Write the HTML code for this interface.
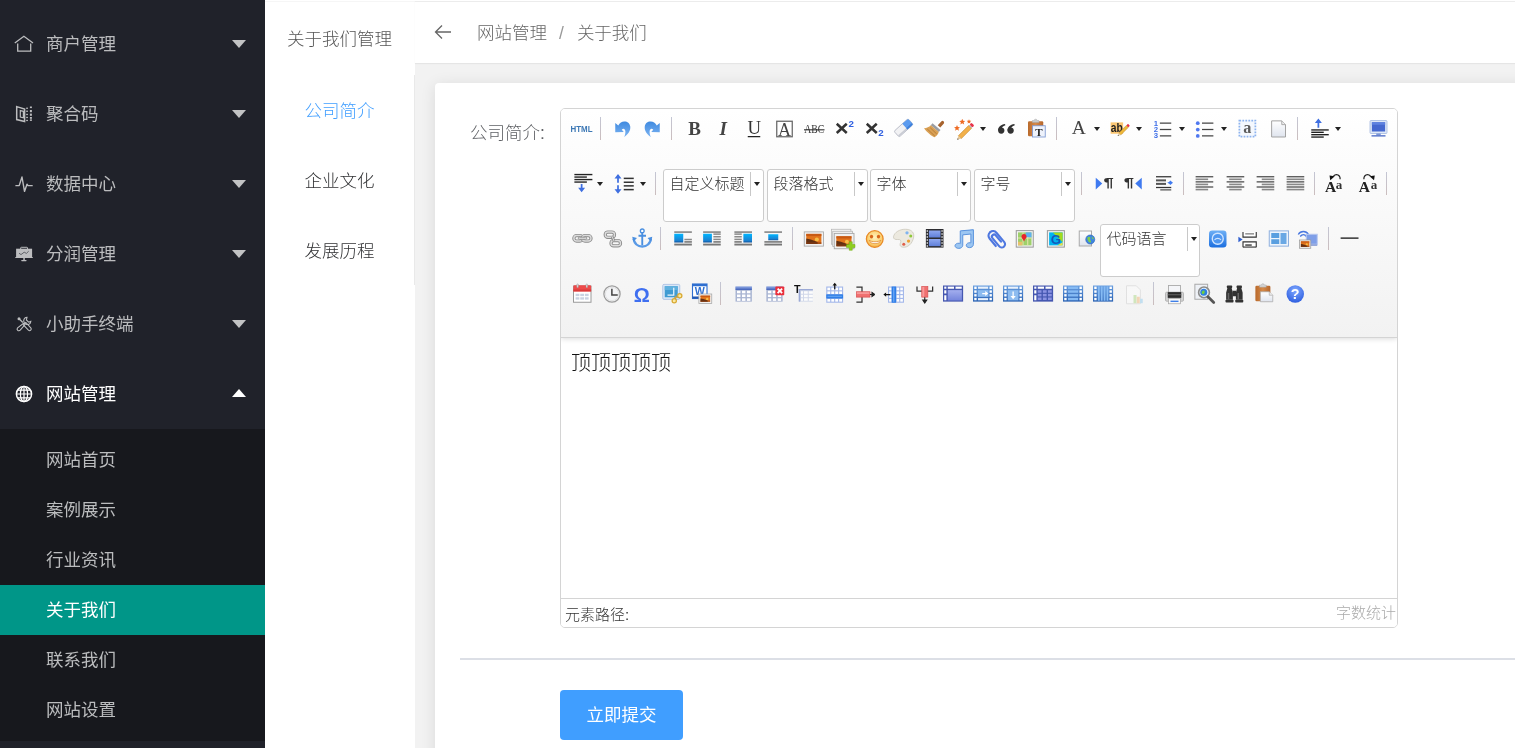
<!DOCTYPE html><html lang="zh-CN"><head><meta charset="utf-8"><title>关于我们管理</title><style>
*{box-sizing:border-box;margin:0;padding:0}
html,body{width:1515px;height:748px;overflow:hidden;background:#fff}
body{will-change:transform}
body{position:relative;font-family:"Liberation Sans","Noto Sans CJK SC",sans-serif;font-size:17.5px;color:#333;font-weight:300}
.abs{position:absolute}
#side{left:0;top:0;width:265px;height:748px;background:#20222a;font-weight:400}
.ni{position:absolute;left:0;width:265px;height:70px;line-height:72px;color:#bbbcbe;padding-left:46px;white-space:nowrap}
.ni svg{position:absolute;left:12px;top:23px;width:24px;height:24px}
.ni i{position:absolute;left:231.500px;top:32px;width:0;height:0;border:7.300px solid transparent;border-top:8px solid #c2c3c4;border-bottom-width:0}
.ni.open{color:#fff}
.ni.open i{border-top-width:0;border-bottom:8px solid #fff;top:31px}
#sub{left:0;top:429px;width:265px;height:312px;background:#17181d}
.si{position:absolute;left:0;width:265px;height:50px;line-height:50px;padding-left:46px;color:#bbbcbe;white-space:nowrap}
.si.on{background:#009688;color:#fff}
#col2{left:265px;top:0;width:150px;height:748px;background:#fff}
#col2 .t{position:absolute;left:22px;top:0;height:76px;line-height:78px;color:#555;white-space:nowrap}
#col2 .m{position:absolute;left:0;width:149px;height:70px;line-height:72px;text-align:center;color:#303133;white-space:nowrap}
#col2 .m.on{color:#409eff}
#col2 .l{position:absolute;left:0;top:1px;width:150px;height:1px;background:#f6f6f6}
#col2 .b{position:absolute;left:149px;top:75px;width:1px;height:210px;background:#e9e9e9}
#main{left:415px;top:0;width:1100px;height:748px;background:#f2f2f2}
#hdr{left:0;top:0;width:1100px;height:63px;background:linear-gradient(#fff 0,#fff 1px,#ececec 1px,#ececec 2px,#fff 2px);box-shadow:0 1px 1px rgba(0,0,0,.05)}
#hdr .bc{position:absolute;left:62px;top:2px;height:63px;line-height:62px;color:#666;white-space:nowrap}
#hdr .bc b{font-weight:normal;color:#999;margin:0 13px 0 12px}
#card{left:20px;top:83px;width:1200px;height:800px;background:#fff;border-radius:4px;box-shadow:0 2px 15px 0 rgba(0,0,0,.1)}
#lbl{left:35px;top:32px;height:36px;line-height:36px;color:#606266;white-space:nowrap}
#ed{left:125px;top:25px;width:838px;height:520px;border:1px solid #d4d4d4;border-radius:5px;background:#fff;overflow:hidden}
#tb{left:0;top:0;width:836px;height:229px;background:linear-gradient(#fff,#f2f2f2);border-bottom:1px solid #d4d4d4;box-shadow:0 1px 5px rgba(0,0,0,.14);z-index:2}
.ic{position:absolute;width:25px;height:25px}
.ic svg{width:25px;height:25px;display:block}
.sep{position:absolute;width:1px;height:23px;background:linear-gradient(#c3c6d4,#cbbdbd)}
.ar{position:absolute;width:0;height:0;border:3.6px solid transparent;border-top:4.2px solid #222;border-bottom-width:0}
.cb{position:absolute;width:100.5px;height:53px;background:#fff;border:1px solid #ccc;border-radius:3px;font-size:15px;line-height:27px;color:#333;padding-left:5.5px;white-space:nowrap}
.cb u{position:absolute;left:86px;top:2px;width:1px;height:24px;background:#c8c8c8}
.cb .ar{left:90px;top:12px}
#body{left:0;top:230px;width:836px;height:260px;background:#fff;padding:10px 10px;font-size:20px;line-height:28px;color:#111}
#bot{left:0;top:489px;width:836px;height:29px;border-top:1px solid #d4d4d4;background:#fff;font-size:15px;line-height:32px;color:#333;padding-left:4px}
#bot span{position:absolute;right:1px;top:0;line-height:28px;color:#aaa}
#hr{left:25px;top:575px;width:1100px;height:2px;background:#dcdfe6}
#btn{left:125px;top:607px;width:123px;height:50px;line-height:50px;background:#409eff;border-radius:4px;color:#fff;text-align:center;font-weight:400}
</style></head><body>
<svg width="0" height="0" style="position:absolute"><defs>
<linearGradient id="gBlue" x1="0" y1="0" x2="0" y2="1"><stop offset="0" stop-color="#3f8ae0"/><stop offset="1" stop-color="#7db4f2"/></linearGradient>
<linearGradient id="gPage" x1="0" y1="0" x2="0" y2="1"><stop offset="0" stop-color="#fff"/><stop offset="1" stop-color="#dfe4ee"/></linearGradient>
<linearGradient id="gSun" x1="0" y1="0" x2="0" y2="1"><stop offset="0" stop-color="#7a2c10"/><stop offset=".55" stop-color="#f08a1c"/><stop offset="1" stop-color="#5a2a12"/></linearGradient>
<linearGradient id="gTbl" x1="0" y1="0" x2="0" y2="1"><stop offset="0" stop-color="#8fa9e6"/><stop offset="1" stop-color="#3f5fb8"/></linearGradient>
<linearGradient id="gTb2" x1="0" y1="0" x2="0" y2="1"><stop offset="0" stop-color="#6a9fe0"/><stop offset="1" stop-color="#2a62b4"/></linearGradient>
<radialGradient id="gSmile" cx=".5" cy=".4" r=".6"><stop offset="0" stop-color="#fff3c0"/><stop offset=".7" stop-color="#fbd070"/><stop offset="1" stop-color="#f4a840"/></radialGradient>
<radialGradient id="gHelp" cx=".5" cy=".3" r=".7"><stop offset="0" stop-color="#7fa8ff"/><stop offset="1" stop-color="#2f5fe0"/></radialGradient>
<linearGradient id="gApp" x1="0" y1="0" x2="0" y2="1"><stop offset="0" stop-color="#6fb0f5"/><stop offset="1" stop-color="#1c6fe0"/></linearGradient>
<linearGradient id="gClip" x1="0" y1="0" x2="1" y2="0"><stop offset="0" stop-color="#b96a2c"/><stop offset=".5" stop-color="#d58a4a"/><stop offset="1" stop-color="#b5652a"/></linearGradient>
<linearGradient id="gImg" x1="0" y1="0" x2="0" y2="1"><stop offset="0" stop-color="#00b6ff"/><stop offset=".8" stop-color="#1b7fd0"/><stop offset="1" stop-color="#0d4f96"/></linearGradient>
<linearGradient id="gFilm" x1="0" y1="0" x2="0" y2="1"><stop offset="0" stop-color="#8fa8f0"/><stop offset="1" stop-color="#5f7fd8"/></linearGradient>
<linearGradient id="gChain" x1="0" y1="0" x2="0" y2="1"><stop offset="0" stop-color="#e8e8e8"/><stop offset="1" stop-color="#a8a8a8"/></linearGradient>
<linearGradient id="gLav" x1="0" y1="0" x2="0" y2="1"><stop offset="0" stop-color="#a3aeee"/><stop offset="1" stop-color="#7585dc"/></linearGradient></defs></svg>
<div id="side" class="abs">
<div class="ni" style="top:8px"><svg viewBox="0 0 24 24"><path d="M2.8 12L11.900 5.200L21 12" fill="none" stroke="#bcbdbf" stroke-width="1.300"/><path d="M5.700 12.400V20.200H18.700V12.400" fill="none" stroke="#bcbdbf" stroke-width="1.300"/></svg>商户管理<i></i></div>
<div class="ni" style="top:78px"><svg viewBox="0 0 24 24"><path d="M4.700 5.600L12.600 8V20.600L4.700 18.600z" fill="none" stroke="#bcbdbf" stroke-width="1.500"/><path d="M8.300 9.600L11.400 10.300V16.800L8.300 16.100z" fill="none" stroke="#bcbdbf" stroke-width="1.200"/><rect x="14.200" y="6.6" width="1.700" height="1.300" fill="#bcbdbf"/><rect x="17.900" y="5.5" width="2" height="1.6" fill="#bcbdbf"/><rect x="14.200" y="9.6" width="1.700" height="1.300" fill="#bcbdbf"/><rect x="17.900" y="9" width="2" height="2.2" fill="#bcbdbf"/><rect x="14.200" y="12.8" width="1.700" height="1.300" fill="#bcbdbf"/><rect x="17.900" y="12.6" width="2" height="2.2" fill="#bcbdbf"/><rect x="14.200" y="15.8" width="1.700" height="1.300" fill="#bcbdbf"/><rect x="17.900" y="16" width="2" height="1.8" fill="#bcbdbf"/><rect x="14.200" y="18.8" width="1.700" height="1.300" fill="#bcbdbf"/><rect x="17.900" y="18.4" width="2" height="1.5" fill="#bcbdbf"/></svg>聚合码<i></i></div>
<div class="ni" style="top:148px"><svg viewBox="0 0 24 24"><path d="M3.400 14.600H7.200L10 6L12.500 20.400L15 13.200L16 14.600H20.700" fill="none" stroke="#bcbdbf" stroke-width="1.400" stroke-linejoin="round"/></svg>数据中心<i></i></div>
<div class="ni" style="top:218px"><svg viewBox="0 0 24 24"><rect x="8.700" y="6.300" width="6.800" height="2.400" rx=".6" fill="none" stroke="#bcbdbf" stroke-width="1"/><rect x="4.100" y="7.700" width="16" height="8.700" fill="#bcbdbf"/><rect x="3.200" y="16" width="17.700" height="1.100" rx=".5" fill="#bcbdbf"/><rect x="11.300" y="17" width="1.500" height="2.200" fill="#bcbdbf"/><rect x="9.200" y="19" width="5.400" height="1.200" rx=".6" fill="#bcbdbf"/><path d="M7 12.200L9 13.600L12.200 11.200L14.400 12.400L16.700 10.200" fill="none" stroke="#55575e" stroke-width=".9"/></svg>分润管理<i></i></div>
<div class="ni" style="top:288px"><svg viewBox="0 0 24 24"><circle cx="7" cy="7.800" r="1.500" fill="#bcbdbf"/><path d="M7.800 8.600L10.800 11.400" stroke="#bcbdbf" stroke-width="1.300"/><path d="M11.600 12.200L13 13.600L8.200 19.200A1.700 1.700 0 0 1 5.600 16.800z" fill="none" stroke="#bcbdbf" stroke-width="1.100"/><path d="M15 6.400A3.200 3.200 0 0 0 12.400 11.600L13.600 12.800A3.200 3.200 0 0 0 18.800 10.400L16.600 11.200L14.400 9z" fill="none" stroke="#bcbdbf" stroke-width="1.100"/><path d="M12.400 12.600L13.800 11.400L18.800 16.800A1.700 1.700 0 0 1 16.400 19.200L11.400 14z" fill="none" stroke="#bcbdbf" stroke-width="1.100"/></svg>小助手终端<i></i></div>
<div class="ni open" style="top:358px"><svg viewBox="0 0 24 24"><circle cx="12" cy="13" r="7.600" fill="none" stroke="#fff" stroke-width="1.500"/><ellipse cx="12" cy="13" rx="3.600" ry="7.600" fill="none" stroke="#fff" stroke-width="1.200"/><path d="M12 5.400V20.600M4.400 13H19.600M5.600 9.200H18.400M5.600 16.800H18.400" stroke="#fff" stroke-width="1.200" fill="none"/></svg>网站管理<i></i></div>
<div id="sub" class="abs">
<div class="si" style="top:6px">网站首页</div>
<div class="si" style="top:56px">案例展示</div>
<div class="si" style="top:106px">行业资讯</div>
<div class="si on" style="top:156px">关于我们</div>
<div class="si" style="top:206px">联系我们</div>
<div class="si" style="top:256px">网站设置</div>
</div></div>
<div id="col2" class="abs"><div class="l"></div><div class="t">关于我们管理</div><div class="b"></div>
<div class="m on" style="top:75px">公司简介</div>
<div class="m" style="top:145px">企业文化</div>
<div class="m" style="top:215px">发展历程</div>
</div>
<div id="main" class="abs">
<div id="hdr" class="abs"><svg class="abs" style="left:19px;top:22px" width="18" height="20" viewBox="0 0 18 20"><path d="M1.5 10H17M8 3.5L1.5 10L8 16.5" fill="none" stroke="#666" stroke-width="1.3"/></svg><div class="bc">网站管理<b>/</b>关于我们</div></div>
<div id="card" class="abs">
<div id="lbl" class="abs">公司简介:</div>
<div id="ed" class="abs"><div id="tb" class="abs">
<div class="ic" style="left:7.50px;top:6.50px"><svg viewBox="0 0 20 20"><text x="10" y="12.4" font-size="7.4" font-weight="bold" fill="#3d78b5" text-anchor="middle" textLength="17.6" lengthAdjust="spacingAndGlyphs" font-family="Liberation Sans,sans-serif">HTML</text></svg></div>
<div class="sep" style="left:39px;top:8px"></div>
<div class="ic" style="left:48.82px;top:6.50px"><svg viewBox="0 0 20 20"><path d="M4.2 5.6 L4.2 13 L11 12.7 L9.4 11 C10.6 9.6 12.2 10.4 12.3 12.4 C12.4 14 12 15.4 11.3 16.8 C14.6 14.6 16.6 11.6 16.2 8.4 C15.9 5.8 13.8 4.3 11.4 4.4 C9.4 4.5 7.8 5.6 6.6 7.6 Z" fill="url(#gBlue)"/></svg></div>
<div class="ic" style="left:78.89px;top:6.50px"><svg viewBox="0 0 20 20"><g transform="translate(20,0) scale(-1,1)"><path d="M4.2 5.6 L4.2 13 L11 12.7 L9.4 11 C10.6 9.6 12.2 10.4 12.3 12.4 C12.4 14 12 15.4 11.3 16.8 C14.6 14.6 16.6 11.6 16.2 8.4 C15.9 5.8 13.8 4.3 11.4 4.4 C9.4 4.5 7.8 5.6 6.6 7.6 Z" fill="url(#gBlue)"/></g></svg></div>
<div class="sep" style="left:110px;top:8px"></div>
<div class="ic" style="left:121.21px;top:6.50px"><svg viewBox="0 0 20 20"><text x="10" y="15.2" font-size="15.2" font-weight="bold" fill="#444" text-anchor="middle" font-family="Liberation Serif,serif">B</text></svg></div>
<div class="ic" style="left:149.28px;top:6.50px"><svg viewBox="0 0 20 20"><text x="10.6" y="15.2" font-size="15.2" font-weight="bold" font-style="italic" fill="#444" text-anchor="middle" font-family="Liberation Serif,serif">I</text></svg></div>
<div class="ic" style="left:180.35px;top:6.50px"><svg viewBox="0 0 20 20"><text x="10.6" y="14.6" font-size="15" fill="#333" text-anchor="middle" font-family="Liberation Serif,serif">U</text><rect x="5.4" y="16" width="10" height="1" fill="#222"/></svg></div>
<div class="ic" style="left:210.42px;top:6.50px"><svg viewBox="0 0 20 20"><rect x="4.6" y="4.2" width="12.4" height="12.4" fill="#fff" stroke="#666" stroke-width="1"/><text x="10.8" y="15.6" font-size="14.5" fill="#444" text-anchor="middle" font-family="Liberation Serif,serif">A</text></svg></div>
<div class="ic" style="left:240.49px;top:6.50px"><svg viewBox="0 0 20 20"><text x="10.6" y="13.9" font-size="10" fill="#333" text-anchor="middle" textLength="16" lengthAdjust="spacingAndGlyphs" font-family="Liberation Serif,serif">ABC</text><rect x="2.4" y="10.6" width="16.4" height=".9" fill="#333"/></svg></div>
<div class="ic" style="left:269.56px;top:6.50px"><svg viewBox="0 0 20 20"><path d="M4.6 6.2L12.6 13.6M12.6 6.2L4.6 13.6" stroke="#333" stroke-width="2" stroke-linecap="butt" fill="none"/><text x="16.2" y="8.6" font-size="7.8" font-weight="bold" fill="#2f5fe0" text-anchor="middle" font-family="Liberation Sans,sans-serif">2</text></svg></div>
<div class="ic" style="left:299.63px;top:6.50px"><svg viewBox="0 0 20 20"><path d="M4.6 6.2L12.6 13.6M12.6 6.2L4.6 13.6" stroke="#333" stroke-width="2" stroke-linecap="butt" fill="none"/><text x="16" y="15.6" font-size="7.8" font-weight="bold" fill="#2f5fe0" text-anchor="middle" font-family="Liberation Sans,sans-serif">2</text></svg></div>
<div class="ic" style="left:329.70px;top:6.50px"><svg viewBox="0 0 20 20"><g transform="translate(10.2 9.6) scale(.86) translate(-10 -10) rotate(-42 10 10)"><rect x="1.2" y="6.2" width="17.6" height="7.2" rx="1.4" fill="#f2f2f4" stroke="#b4b8c4" stroke-width=".8"/><path d="M11.6 6.2h5.8a1.4 1.4 0 0 1 1.4 1.4v4.4a1.4 1.4 0 0 1-1.4 1.4h-5.8z" fill="#5b9bef"/><rect x="1.6" y="11.6" width="10" height="1.6" fill="#c9ccd4"/><rect x="11.6" y="11.6" width="6.8" height="1.6" fill="#3f7fd8"/></g></svg></div>
<div class="ic" style="left:359.77px;top:6.50px"><svg viewBox="0 0 20 20"><path d="M13.4 7.4L16.4 4.2a1.3 1.3 0 0 1 1.9 1.7L15.4 9.2z" fill="#a7632e"/><path d="M9.2 5.8L15.6 11.2L14.2 12.8L7.8 7.4z" fill="#9a9da3"/><path d="M7.8 7.4L14.2 12.8C13.6 15 11.8 16.6 10.8 17C8.6 16.2 5.2 13.4 2.4 9.8C4.6 9.6 6.6 8.8 7.8 7.4z" fill="#d9a055"/><path d="M5 10.4L11 16M7.4 9.4l5.2 5" stroke="#b37a35" stroke-width=".7" fill="none"/></svg></div>
<div class="ic" style="left:389.64px;top:6.50px"><svg viewBox="0 0 20 20"><g fill="#ee6a22"><path transform="translate(9,4.6)" d="M0 -2.4L.7 -.8L2.4 -.7L1.1 .4L1.5 2.1L0 1.2L-1.5 2.1L-1.1 .4L-2.4 -.7L-.7 -.8Z"/><path transform="translate(14.4,4.4) scale(.75)" d="M0 -2.4L.7 -.8L2.4 -.7L1.1 .4L1.5 2.1L0 1.2L-1.5 2.1L-1.1 .4L-2.4 -.7L-.7 -.8Z"/><path transform="translate(4.8,9.6)" d="M0 -2.4L.7 -.8L2.4 -.7L1.1 .4L1.5 2.1L0 1.2L-1.5 2.1L-1.1 .4L-2.4 -.7L-.7 -.8Z"/></g><g transform="rotate(-45 12 12)"><rect x="5" y="10.4" width="11.6" height="3.2" fill="#f2b04a" stroke="#c98a2c" stroke-width=".5"/><path d="M5 10.4L2 12L5 13.6z" fill="#e8c99a"/><path d="M2 12l1.2-.6v1.2z" fill="#444"/><rect x="16.6" y="10.4" width="1" height="3.2" fill="#bbb"/><rect x="17.6" y="10.4" width="2.2" height="3.2" rx=".8" fill="#e8334a"/></g></svg></div>
<div class="ar" style="left:418.99px;top:17.80px"></div>
<div class="ic" style="left:433.34px;top:6.50px"><svg viewBox="0 0 20 20"><circle cx="5.800000000000001" cy="11.600000000000001" r="2.500" fill="#333"/><path d="M3.3000000000000003 11.8C3.0 9.0 5.4 6.9 8.8 6.4L9.100000000000001 7.300000000000001C7.2 8.0 6.300000000000001 9.0 6.1 10.0z" fill="#333"/><circle cx="13.299999999999999" cy="11.600000000000001" r="2.500" fill="#333"/><path d="M10.799999999999999 11.8C10.5 9.0 12.899999999999999 6.9 16.299999999999997 6.4L16.6 7.300000000000001C14.7 8.0 13.799999999999999 9.0 13.6 10.0z" fill="#333"/></svg></div>
<div class="ic" style="left:463.41px;top:6.50px"><svg viewBox="0 0 20 20"><rect x="3.2" y="4.2" width="12.2" height="12" rx="1" fill="url(#gClip)"/><path d="M6.6 4.6V3.6h1.6a1.1 1.1 0 0 1 2.2 0h1.6v1.6h-5.4z" fill="#c9c9c9" stroke="#999" stroke-width=".3"/><rect x="6.8" y="7.8" width="10.2" height="9" fill="#eef2fb" stroke="#7f9ad2" stroke-width=".7"/><text x="11.9" y="15.6" font-size="8.8" font-weight="bold" fill="#222" text-anchor="middle" font-family="Liberation Serif,serif">T</text></svg></div>
<div class="sep" style="left:495px;top:8px"></div>
<div class="ic" style="left:504.73px;top:6.50px"><svg viewBox="0 0 20 20"><text x="10.2" y="14.2" font-size="15.6" fill="#444" text-anchor="middle" font-family="Liberation Serif,serif">A</text></svg></div>
<div class="ar" style="left:532.88px;top:17.80px"></div>
<div class="ic" style="left:547.23px;top:6.50px"><svg viewBox="0 0 20 20"><rect x="2.1" y="5.1" width="10" height="9.1" fill="#fbc774"/><text x="7" y="13" font-size="9.6" font-weight="bold" fill="#222" text-anchor="middle" textLength="9.6" lengthAdjust="spacingAndGlyphs" font-family="Liberation Sans,sans-serif">ab</text><g transform="rotate(-45 12.4 11.4)"><rect x="8.2" y="10.3" width="8.6" height="2.2" fill="#f0b93a" stroke="#b8862a" stroke-width=".4"/><path d="M8.2 10.3L5.8 11.4L8.2 12.5z" fill="#e6cfa6"/><path d="M5.8 11.4l1-.45v.9z" fill="#333"/><rect x="16.8" y="10.3" width="1.8" height="2.2" rx=".6" fill="#e8334a"/></g></svg></div>
<div class="ar" style="left:575.38px;top:17.80px"></div>
<div class="ic" style="left:589.73px;top:6.50px"><svg viewBox="0 0 20 20"><rect x="7.1" y="5.2" width="9.1" height="1" fill="#444"/><rect x="7.1" y="10.3" width="9.1" height="1" fill="#444"/><rect x="7.1" y="15.4" width="9.1" height="1" fill="#444"/><text x="3.9" y="7.6" font-size="6.2" font-weight="bold" fill="#3f6fe8" text-anchor="middle" font-family="Liberation Sans,sans-serif">1</text><text x="3.9" y="12.7" font-size="6.2" font-weight="bold" fill="#3f6fe8" text-anchor="middle" font-family="Liberation Sans,sans-serif">2</text><text x="3.9" y="17.8" font-size="6.2" font-weight="bold" fill="#3f6fe8" text-anchor="middle" font-family="Liberation Sans,sans-serif">3</text></svg></div>
<div class="ar" style="left:617.88px;top:17.80px"></div>
<div class="ic" style="left:633.23px;top:6.50px"><svg viewBox="0 0 20 20"><rect x="6.4" y="5.2" width="9.1" height="1" fill="#444"/><rect x="6.4" y="10.3" width="9.1" height="1" fill="#444"/><rect x="6.4" y="15.4" width="9.1" height="1" fill="#444"/><circle cx="3" cy="5.7" r="1.5" fill="#4f78f0"/><circle cx="3" cy="10.8" r="1.5" fill="#4f78f0"/><circle cx="3" cy="15.9" r="1.5" fill="#4f78f0"/></svg></div>
<div class="ar" style="left:660.38px;top:17.80px"></div>
<div class="ic" style="left:676.23px;top:6.50px"><svg viewBox="0 0 20 20"><rect x="1.9" y="3.6" width="12.8" height="12.8" fill="#f4f8fe" stroke="#8db3ee" stroke-width="1.4" stroke-dasharray="1.4 1"/><text x="8.2" y="13.8" font-size="13" font-weight="bold" fill="#5a5a5a" text-anchor="middle" font-family="Liberation Serif,serif">a</text></svg></div>
<div class="ic" style="left:706.60px;top:6.50px"><svg viewBox="0 0 20 20"><path d="M2.9 3.9H11L14 6.9V16.8H2.9z" fill="url(#gPage)" stroke="#a3a3a3" stroke-width=".8"/><path d="M11 3.9V6.9H14" fill="#eee" stroke="#a3a3a3" stroke-width=".7"/></svg></div>
<div class="sep" style="left:736px;top:8px"></div>
<div class="ic" style="left:745.32px;top:6.50px"><svg viewBox="0 0 20 20"><path d="M9.9 2L12.7 5.6H10.6V9.4H9.200000000000001V5.6H7.1000000000000005z" fill="#3f6fe0"/><rect x="4.2" y="10.6" width="14" height="1.1" fill="#222"/><rect x="4.2" y="12.5" width="10" height="1.1" fill="#222"/><rect x="4.2" y="14.4" width="14" height="1.1" fill="#222"/><rect x="4.2" y="16.3" width="10" height="1.1" fill="#222"/></svg></div>
<div class="ar" style="left:774.27px;top:17.80px"></div>
<div class="ic" style="left:7.50px;top:61.50px"><svg viewBox="0 0 20 20"><rect x="4.3" y="2.3" width="14.4" height="1.1" fill="#222"/><rect x="4.3" y="4.3" width="10" height="1.1" fill="#222"/><rect x="4.3" y="6.3" width="14.4" height="1.1" fill="#222"/><rect x="4.3" y="8.3" width="10" height="1.1" fill="#222"/><path d="M10.1 17L12.899999999999999 13.4H10.799999999999999V10.4H9.4V13.4H7.3z" fill="#3f6fe0"/></svg></div>
<div class="ar" style="left:35.65px;top:72.80px"></div>
<div class="ic" style="left:50.00px;top:61.50px"><svg viewBox="0 0 20 20"><path d="M5.6 2.4L8.399999999999999 6.0H6.3V9.4H4.8999999999999995V6.0H2.8z" fill="#3f6fe0"/><path d="M5.6 18.2L8.399999999999999 14.6H6.3V11.4H4.8999999999999995V14.6H2.8z" fill="#3f6fe0"/><rect x="10.2" y="5.3" width="8" height="1.2" fill="#333"/><rect x="10.2" y="8.4" width="8" height="1.2" fill="#333"/><rect x="10.2" y="11.3" width="8" height="1.2" fill="#333"/><rect x="10.2" y="14.3" width="8" height="1.2" fill="#333"/></svg></div>
<div class="ar" style="left:79.45px;top:72.80px"></div>
<div class="sep" style="left:94px;top:63px"></div>
<div class="cb" style="left:102.00px;top:59.50px;width:101px">自定义标题<u></u><div class="ar"></div></div>
<div class="cb" style="left:206.00px;top:59.50px;width:101px">段落格式<u></u><div class="ar"></div></div>
<div class="cb" style="left:309.00px;top:59.50px;width:101px">字体<u></u><div class="ar"></div></div>
<div class="cb" style="left:413.00px;top:59.50px;width:101px">字号<u></u><div class="ar"></div></div>
<div class="sep" style="left:520px;top:63px"></div>
<div class="ic" style="left:531.00px;top:61.50px"><svg viewBox="0 0 20 20"><path d="M3 5.3L8.2 10L3 14.7z" fill="#3f7af0"/><text x="13.2" y="12.700" font-size="10.400" font-weight="bold" fill="#333" text-anchor="middle" textLength="8.200" lengthAdjust="spacingAndGlyphs" font-family="Liberation Sans,sans-serif">¶</text></svg></div>
<div class="ic" style="left:559.37px;top:61.50px"><svg viewBox="0 0 20 20"><text x="7" y="12.700" font-size="10.400" font-weight="bold" fill="#333" text-anchor="middle" textLength="8.200" lengthAdjust="spacingAndGlyphs" font-family="Liberation Sans,sans-serif">¶</text><path d="M17.4 5.3L12.2 10L17.4 14.7z" fill="#3f7af0"/></svg></div>
<div class="ic" style="left:590.14px;top:61.50px"><svg viewBox="0 0 20 20"><rect x="4" y="4.1" width="12.2" height="1" fill="#333"/><rect x="4" y="6.7" width="8" height="1.6" fill="#555"/><rect x="4" y="9.5" width="8" height="1.6" fill="#555"/><rect x="4" y="12.7" width="12.2" height="1" fill="#333"/><rect x="7.4" y="14.6" width="8.8" height="1" fill="#555"/><path d="M17.6 9.4L15.4 7.6L14.6 8.6L13 9.4L14.6 10.2L15.4 11.2z" fill="#3f7af0"/></svg></div>
<div class="sep" style="left:622px;top:63px"></div>
<div class="ic" style="left:631.46px;top:61.50px"><svg viewBox="0 0 20 20"><rect x="2.9" y="4.1" width="14.1" height="1" fill="#4a4a4a"/><rect x="2.9" y="6.0" width="10" height="1.3" fill="#888"/><rect x="2.9" y="8.2" width="14.1" height="1" fill="#4a4a4a"/><rect x="2.9" y="10.1" width="10" height="1.3" fill="#888"/><rect x="2.9" y="12.3" width="14.1" height="1" fill="#4a4a4a"/><rect x="2.9" y="14.200000000000001" width="10" height="1.3" fill="#888"/></svg></div>
<div class="ic" style="left:661.53px;top:61.50px"><svg viewBox="0 0 20 20"><rect x="2.9" y="4.1" width="14.1" height="1" fill="#4a4a4a"/><rect x="4.949999999999999" y="6.0" width="10" height="1.3" fill="#888"/><rect x="2.9" y="8.2" width="14.1" height="1" fill="#4a4a4a"/><rect x="4.949999999999999" y="10.1" width="10" height="1.3" fill="#888"/><rect x="2.9" y="12.3" width="14.1" height="1" fill="#4a4a4a"/><rect x="4.949999999999999" y="14.200000000000001" width="10" height="1.3" fill="#888"/></svg></div>
<div class="ic" style="left:691.60px;top:61.50px"><svg viewBox="0 0 20 20"><rect x="2.9" y="4.1" width="14.1" height="1" fill="#4a4a4a"/><rect x="7.0" y="6.0" width="10" height="1.3" fill="#888"/><rect x="2.9" y="8.2" width="14.1" height="1" fill="#4a4a4a"/><rect x="7.0" y="10.1" width="10" height="1.3" fill="#888"/><rect x="2.9" y="12.3" width="14.1" height="1" fill="#4a4a4a"/><rect x="7.0" y="14.200000000000001" width="10" height="1.3" fill="#888"/></svg></div>
<div class="ic" style="left:721.67px;top:61.50px"><svg viewBox="0 0 20 20"><rect x="2.9" y="4.1" width="14.1" height="1" fill="#4a4a4a"/><rect x="2.9" y="6.0" width="14.1" height="1.3" fill="#888"/><rect x="2.9" y="8.2" width="14.1" height="1" fill="#4a4a4a"/><rect x="2.9" y="10.1" width="14.1" height="1.3" fill="#888"/><rect x="2.9" y="12.3" width="14.1" height="1" fill="#4a4a4a"/><rect x="2.9" y="14.200000000000001" width="14.1" height="1.3" fill="#888"/></svg></div>
<div class="sep" style="left:753px;top:63px"></div>
<div class="ic" style="left:762.99px;top:61.50px"><svg viewBox="0 0 20 20"><text x="5.2" y="16.6" font-size="12.4" font-weight="bold" fill="#222" text-anchor="middle" font-family="Liberation Serif,serif">A</text><text x="12" y="14.5" font-size="10.4" font-weight="bold" fill="#333" text-anchor="middle" font-family="Liberation Serif,serif">a</text><path d="M12.9 6.6C13.2 3.4 10 1.6 7.6 4" fill="none" stroke="#222" stroke-width=".9"/><path d="M4.4 3.6L8.6 4.2L5 7.4z" fill="#111"/></svg></div>
<div class="ic" style="left:793.06px;top:61.50px"><svg viewBox="0 0 20 20"><text x="8.2" y="16.6" font-size="12.4" font-weight="bold" fill="#222" text-anchor="middle" font-family="Liberation Serif,serif">A</text><text x="16" y="14.5" font-size="10.4" font-weight="bold" fill="#333" text-anchor="middle" font-family="Liberation Serif,serif">a</text><path d="M7.9 6.6C7.6 3.4 10.8 1.6 13.2 4" fill="none" stroke="#222" stroke-width=".9"/><path d="M16.6 3.6L12.4 4.2L16 7.4z" fill="#111"/></svg></div>
<div class="sep" style="left:825px;top:63px"></div>
<div class="ic" style="left:7.50px;top:116.50px"><svg viewBox="0 0 20 20"><rect x="3.9" y="7.6" width="7" height="4.4" rx="2.2" fill="none" stroke="#8c8c8c" stroke-width="2.6"/><rect x="3.9" y="7.6" width="7" height="4.4" rx="2.2" fill="none" stroke="#dcdcdc" stroke-width="1.1"/><rect x="10.6" y="7.6" width="7" height="4.4" rx="2.2" fill="none" stroke="#8c8c8c" stroke-width="2.6"/><rect x="10.6" y="7.6" width="7" height="4.4" rx="2.2" fill="none" stroke="#dcdcdc" stroke-width="1.1"/><rect x="7.4" y="8.9" width="6.8" height="1.8" rx=".9" fill="#dcdcdc" stroke="#8c8c8c" stroke-width=".7"/></svg></div>
<div class="ic" style="left:37.57px;top:116.50px"><svg viewBox="0 0 20 20"><rect x="5" y="4.8" width="7.4" height="4.2" rx="2.1" fill="none" stroke="#8c8c8c" stroke-width="2.6"/><rect x="5" y="4.8" width="7.4" height="4.2" rx="2.1" fill="none" stroke="#dcdcdc" stroke-width="1.1"/><rect x="9.6" y="11.6" width="7.6" height="4.2" rx="2.1" fill="none" stroke="#8c8c8c" stroke-width="2.6"/><rect x="9.6" y="11.6" width="7.6" height="4.2" rx="2.1" fill="none" stroke="#dcdcdc" stroke-width="1.1"/><path d="M10.6 8.6L12 12" stroke="#8c8c8c" stroke-width="2.2" fill="none"/><path d="M10.6 8.6L12 12" stroke="#dcdcdc" stroke-width=".8" fill="none"/></svg></div>
<div class="ic" style="left:67.64px;top:116.50px"><svg viewBox="0 0 20 20"><circle cx="10.6" cy="3.9" r="1.5" fill="#fff" stroke="#4a8fe0" stroke-width="1.1"/><path d="M10.6 5.4V15.6M7.6 7.8H13.6" stroke="#4a8fe0" stroke-width="1.5" fill="none"/><path d="M3.6 10.2C4.4 14.2 7.2 16.4 10.6 16.4C14 16.4 16.8 14.2 17.6 10.2" fill="none" stroke="#5a9ae6" stroke-width="1.8"/><path d="M2.6 8.6L6.4 9.6L3.4 12.6z M18.6 8.6L14.8 9.6L17.8 12.6z" fill="#4a8fe0"/></svg></div>
<div class="sep" style="left:99px;top:118px"></div>
<div class="ic" style="left:108.96px;top:116.50px"><svg viewBox="0 0 20 20"><rect x="3.4" y="4.4" width="14.1" height=".9" fill="#555"/><rect x="3.4" y="6.2" width="7.2" height="7" fill="url(#gImg)"/><rect x="11.5" y="10.2" width="6" height="1.2" fill="#8a8a8a"/><rect x="11.5" y="12.3" width="6" height="0.9" fill="#444"/><rect x="3.4" y="14.1" width="14.1" height="1.5" fill="#777"/></svg></div>
<div class="ic" style="left:139.03px;top:116.50px"><svg viewBox="0 0 20 20"><rect x="2.5" y="4.4" width="14.1" height=".9" fill="#555"/><rect x="2.5" y="6.2" width="7" height="7" fill="url(#gImg)"/><rect x="10.7" y="5.9" width="5.9" height="1.2" fill="#8a8a8a"/><rect x="10.7" y="8" width="5.9" height="1.2" fill="#8a8a8a"/><rect x="10.7" y="10.1" width="5.9" height="1.2" fill="#8a8a8a"/><rect x="10.7" y="12.3" width="5.9" height="0.9" fill="#444"/><rect x="2.5" y="14.1" width="14.1" height="1.5" fill="#777"/></svg></div>
<div class="ic" style="left:169.10px;top:116.50px"><svg viewBox="0 0 20 20"><rect x="3.5" y="4.4" width="14.1" height=".9" fill="#555"/><rect x="10.7" y="6.2" width="6.9" height="7" fill="url(#gImg)"/><rect x="3.5" y="5.9" width="5.9" height="1.2" fill="#8a8a8a"/><rect x="3.5" y="8" width="5.9" height="1.2" fill="#8a8a8a"/><rect x="3.5" y="10.1" width="5.9" height="1.2" fill="#8a8a8a"/><rect x="3.5" y="12.3" width="5.9" height="0.9" fill="#444"/><rect x="3.5" y="14.1" width="14.1" height="1.5" fill="#777"/></svg></div>
<div class="ic" style="left:199.17px;top:116.50px"><svg viewBox="0 0 20 20"><rect x="3.5" y="4.4" width="14.1" height=".9" fill="#555"/><rect x="6.6" y="6.6" width="8" height="4.8" fill="url(#gImg)"/><rect x="3.5" y="12.3" width="14.1" height="0.9" fill="#444"/><rect x="3.5" y="14.1" width="14.1" height="1.5" fill="#777"/></svg></div>
<div class="sep" style="left:231px;top:118px"></div>
<div class="ic" style="left:240.49px;top:116.50px"><svg viewBox="0 0 20 20"><rect x="2.6" y="4.7" width="15.4" height="11.4" fill="#f1f1f1" stroke="#a9a9a9" stroke-width=".7"/><rect x="4.2" y="6.3" width="12.1" height="8.1" fill="#e2741c"/><rect x="4.2" y="6.3" width="12.1" height="1.782" fill="#c85a14"/><circle cx="12.669999999999998" cy="10.754999999999999" r="1.62" fill="#f7c44a" opacity=".9"/><path d="M4.2 9.945L7.83 10.754999999999999L13.274999999999999 12.780000000000001V14.399999999999999H4.2z" fill="#4a2410" opacity=".85"/><rect x="4.2" y="12.942" width="12.1" height="1.458" fill="#8a3c12" opacity=".6"/></svg></div>
<div class="ic" style="left:269.56px;top:116.50px"><svg viewBox="0 0 20 20"><rect x=".3" y="2.6" width="15.6" height="12" fill="#f6f6f6" stroke="#b5b5b5" stroke-width=".6"/><rect x="1.4" y="4.2" width="15.8" height="12.2" fill="#f3f3f3" stroke="#b0b0b0" stroke-width=".6"/><rect x="2.6" y="5.9" width="15.8" height="12.3" fill="#f1f1f1" stroke="#a5a5a5" stroke-width=".7"/><rect x="4.3" y="8.2" width="12.1" height="8" fill="#e2741c"/><rect x="4.3" y="8.2" width="12.1" height="1.76" fill="#c85a14"/><circle cx="12.77" cy="12.6" r="1.6" fill="#f7c44a" opacity=".9"/><path d="M4.3 11.799999999999999L7.93 12.6L13.375 14.6V16.2H4.3z" fill="#4a2410" opacity=".85"/><rect x="4.3" y="14.759999999999998" width="12.1" height="1.44" fill="#8a3c12" opacity=".6"/><path d="M14.6 12.6h2.4v2.2h2.2v2.4h-2.2v2.2h-2.4v-2.2h-2.2v-2.4h2.2z" fill="#8fce1e" stroke="#6faa10" stroke-width=".4"/></svg></div>
<div class="ic" style="left:300.63px;top:116.50px"><svg viewBox="0 0 20 20"><circle cx="10.2" cy="10.4" r="6.7" fill="url(#gSmile)" stroke="#e88a28" stroke-width="1"/><ellipse cx="7.6" cy="8.4" rx="1.3" ry="1.5" fill="#d8661a"/><ellipse cx="13.2" cy="8.4" rx="1.3" ry="1.5" fill="#d8661a"/><path d="M5.8 11.4C7.4 13 13.4 13 15 11.4C14.4 15 6.4 15 5.8 11.4z" fill="#fff" stroke="#d8761a" stroke-width=".5"/></svg></div>
<div class="ic" style="left:329.70px;top:116.50px"><svg viewBox="0 0 20 20"><path d="M2 8.6C2.6 5 7 2.6 11.4 2.6C15.6 2.6 18.4 4.6 18.2 8C18 12 15 16.8 10.6 17C7.6 17.1 6.6 15.6 7.6 13.4C8.4 11.6 7.4 10.6 5.4 10.8C3.4 11 1.8 10.4 2 8.6z" fill="#ece9df" stroke="#c9c5b8" stroke-width=".6"/><circle cx="12.8" cy="5.4" r="1.3" fill="#7fb4f0"/><circle cx="15.8" cy="8" r="1.2" fill="#8fc83a"/><circle cx="14" cy="12" r="1.3" fill="#f0a030"/><circle cx="10.2" cy="14.6" r="1.2" fill="#e0604a"/></svg></div>
<div class="ic" style="left:360.07px;top:116.50px"><svg viewBox="0 0 20 20"><rect x="3.9" y="2.4" width="14.1" height="14.9" fill="#2c2c30"/><rect x="6.3" y="3.6" width="9.3" height="5.6" fill="url(#gFilm)"/><rect x="6.3" y="10.4" width="9.3" height="5.7" fill="url(#gFilm)"/><rect x="4.5" y="3.4" width="1.1" height="1.2" fill="#ddd"/><rect x="16.3" y="3.4" width="1.1" height="1.2" fill="#ddd"/><rect x="4.5" y="5.8" width="1.1" height="1.2" fill="#ddd"/><rect x="16.3" y="5.8" width="1.1" height="1.2" fill="#ddd"/><rect x="4.5" y="8.2" width="1.1" height="1.2" fill="#ddd"/><rect x="16.3" y="8.2" width="1.1" height="1.2" fill="#ddd"/><rect x="4.5" y="10.6" width="1.1" height="1.2" fill="#ddd"/><rect x="16.3" y="10.6" width="1.1" height="1.2" fill="#ddd"/><rect x="4.5" y="13" width="1.1" height="1.2" fill="#ddd"/><rect x="16.3" y="13" width="1.1" height="1.2" fill="#ddd"/><rect x="4.5" y="15.4" width="1.1" height="1.2" fill="#ddd"/><rect x="16.3" y="15.4" width="1.1" height="1.2" fill="#ddd"/></svg></div>
<div class="ic" style="left:390.04px;top:116.50px"><svg viewBox="0 0 20 20"><path d="M7.8 4.4L17.4 3.4V14.4" fill="none" stroke="#6fa4e6" stroke-width="1"/><path d="M7.4 3.9L17.9 3V14.6C17.9 16.4 16.4 17.3 14.8 17.3C13.2 17.3 12.2 16.5 12.2 15.4C12.2 14.2 13.6 13.2 15.4 13.4L15.9 13.5V6.4L9.4 7.1V15.4C9.4 17 7.8 17.9 6.2 17.9C4.6 17.9 3.2 17.1 3.2 15.8C3.2 14.5 4.8 13.6 6.6 13.8L7.4 14z" fill="#9cc6f2" stroke="#5b93dd" stroke-width=".8"/></svg></div>
<div class="ic" style="left:420.91px;top:116.50px"><svg viewBox="0 0 20 20"><g transform="rotate(-40 12 10)"><path d="M12 1.6a3.6 3.6 0 0 1 3.6 3.6V15a2.6 2.6 0 0 1-5.2 0V6.4a1.7 1.7 0 0 1 3.4 0V13" fill="none" stroke="#4f78e0" stroke-width="1.7" stroke-linecap="round" transform="translate(-1 1)"/><path d="M12 1.6a3.6 3.6 0 0 0-3.6 3.6V13" fill="none" stroke="#4f78e0" stroke-width="1.7" stroke-linecap="round" transform="translate(-1 1)"/></g></svg></div>
<div class="ic" style="left:450.28px;top:116.50px"><svg viewBox="0 0 20 20"><rect x="4.2" y="3.7" width="13.6" height="13.2" fill="#f4f4f4" stroke="#999" stroke-width=".8"/><rect x="5.6" y="5.1" width="10.8" height="10.4" fill="#9ed06a"/><rect x="11.8" y="5.1" width="4.6" height="4.2" fill="#5fb0f0"/><path d="M5.6 9.6h10.8M9.6 5.1v10.4M13.4 9v6.5" stroke="#e8e4b0" stroke-width=".8"/><rect x="5.6" y="12.6" width="3.4" height="2.9" fill="#e8c06a"/><circle cx="10.4" cy="8.4" r="2" fill="#e8242a"/><path d="M9 9.6L10.4 12.4L11.8 9.6z" fill="#e8242a"/></svg></div>
<div class="ic" style="left:480.45px;top:116.50px"><svg viewBox="0 0 20 20"><rect x="5.1" y="3.7" width="13.6" height="13.2" fill="#f4f4f4" stroke="#999" stroke-width=".8"/><rect x="6.5" y="5.1" width="10.8" height="10.4" fill="#00b4f0"/><path d="M9.5 5.1H17.3V13z" fill="#a4da1c"/><path d="M17.3 13V15.500H13z" fill="#f0e040"/><text x="11.8" y="14.2" font-size="10.5" font-weight="bold" fill="#1457b8" text-anchor="middle" font-family="Liberation Sans,sans-serif">G</text></svg></div>
<div class="ic" style="left:510.12px;top:116.50px"><svg viewBox="0 0 20 20"><rect x="6.6" y="4" width="9.8" height="12" fill="url(#gPage)" stroke="#a9a9a9" stroke-width=".8"/><circle cx="15.4" cy="10.8" r="3.6" fill="#3f86e0" stroke="#2a62b8" stroke-width=".5"/><path d="M13.4 9C14.4 8 15.8 8.6 15.4 10C15 11.4 16.4 11.6 16 13C15 13.6 14 12.8 13.6 11.6C13.2 10.6 12.8 9.8 13.4 9z" fill="#7ccf4a"/><path d="M16.6 8.4c1 .4 1.6 1.4 1.6 2.2l-1.200-.4z" fill="#7ccf4a"/></svg></div>
<div class="cb" style="left:539.00px;top:114.50px;width:100px">代码语言<u></u><div class="ar"></div></div>
<div class="ic" style="left:644.94px;top:116.50px"><svg viewBox="0 0 20 20"><rect x="2.4" y="3.5" width="14" height="13.6" rx="2.6" fill="url(#gApp)"/><circle cx="9.4" cy="10.2" r="4.4" fill="#4f97f0" stroke="#cfe4ff" stroke-width="1.1"/><path d="M6.800 11.200C8 9.400 10.800 9.400 12 11.200" stroke="#cfe4ff" stroke-width=".9" fill="none"/></svg></div>
<div class="ic" style="left:675.01px;top:116.50px"><svg viewBox="0 0 20 20"><path d="M1.9 8.600L5.300 10.800L1.900 13z" fill="#2f5fd0"/><path d="M5.600 4.700V8.900H16.200V4.700" fill="#fff" stroke="#333" stroke-width=".9"/><rect x="7.400" y="5.600" width="7" height="1.300" fill="#999"/><path d="M5.600 17V12.700H16.200V17" fill="#fff" stroke="#333" stroke-width=".9"/><rect x="7.400" y="14.600" width="5.200" height="1.300" fill="#555"/><rect x="5.600" y="16.400" width="10.600" height=".9" fill="#333"/></svg></div>
<div class="ic" style="left:705.08px;top:116.50px"><svg viewBox="0 0 20 20"><rect x="2.600" y="3.900" width="15.400" height="12.200" fill="#eef4fc" stroke="#8fb0de" stroke-width=".8"/><rect x="4.200" y="5.600" width="6.400" height="4" fill="#5a9fe0"/><rect x="4.200" y="10.600" width="6.400" height="3.800" fill="#5a9fe0"/><rect x="11.600" y="5.600" width="4.800" height="8.800" fill="#6aa8e4"/></svg></div>
<div class="ic" style="left:735.15px;top:116.50px"><svg viewBox="0 0 20 20"><path d="M1.800 6.800C3.800 3.600 8 3.600 10 6.800M3.400 8.400C4.800 6.400 7 6.400 8.400 8.400" fill="none" stroke="#4a78e0" stroke-width="1.100"/><rect x="8.200" y="6.600" width="8.800" height="8" fill="#7f9fe8" stroke="#b8c8ee" stroke-width=".8"/><rect x="10.400" y="14.600" width="6.600" height="1.300" fill="#8aa0d8"/><rect x="2.800" y="11.200" width="9" height="6.600" fill="#f2f2f2" stroke="#9a9a9a" stroke-width=".6"/><rect x="3.9" y="12.3" width="6.8" height="4.4" fill="#e2741c"/><rect x="3.9" y="12.3" width="6.8" height="0.9680000000000001" fill="#c85a14"/><circle cx="8.66" cy="14.72" r="0.8800000000000001" fill="#f7c44a" opacity=".9"/><path d="M3.9 14.280000000000001L5.9399999999999995 14.72L9.0 15.82V16.700000000000003H3.9z" fill="#4a2410" opacity=".85"/><rect x="3.9" y="15.908000000000001" width="6.8" height="0.792" fill="#8a3c12" opacity=".6"/></svg></div>
<div class="sep" style="left:767px;top:118px"></div>
<div class="ic" style="left:775.97px;top:116.50px"><svg viewBox="0 0 20 20"><rect x="2.900" y="9.100" width="14.300" height="1.200" fill="#333"/></svg></div>
<div class="ic" style="left:7.50px;top:171.50px"><svg viewBox="0 0 20 20"><rect x="3.6" y="4" width="14" height="13" fill="#fff" stroke="#9a9a9a" stroke-width=".8"/><path d="M3.500 8.300V4.400a1 1 0 0 1 1-1h12.200a1 1 0 0 1 1 1V8.300z" fill="#ee4a4a"/><rect x="3.500" y="6.800" width="14.200" height="1.500" fill="#d83a3a"/><rect x="6.200" y="2.300" width="1.300" height="3" rx=".6" fill="#ddd" stroke="#888" stroke-width=".3"/><rect x="13.600" y="2.300" width="1.300" height="3" rx=".6" fill="#ddd" stroke="#888" stroke-width=".3"/><rect x="5.3" y="10.2" width="3" height="1.900" fill="#c9d2e2"/><rect x="5.3" y="13" width="3" height="1.900" fill="#c9d2e2"/><rect x="9" y="10.2" width="3" height="1.900" fill="#c9d2e2"/><rect x="9" y="13" width="3" height="1.900" fill="#c9d2e2"/><rect x="12.7" y="10.2" width="3" height="1.900" fill="#c9d2e2"/><rect x="12.7" y="13" width="3" height="1.900" fill="#c9d2e2"/></svg></div>
<div class="ic" style="left:37.57px;top:171.50px"><svg viewBox="0 0 20 20"><circle cx="10.400" cy="10.400" r="6.500" fill="#f4f5f7" stroke="#9c9c9c" stroke-width="1"/><circle cx="10.400" cy="10.400" r="5.300" fill="none" stroke="#dcdcdc" stroke-width=".6"/><path d="M10.300 6.200V11.200H15" fill="none" stroke="#444" stroke-width="1.200"/></svg></div>
<div class="ic" style="left:67.64px;top:171.50px"><svg viewBox="0 0 20 20"><text x="10.300" y="16.500" font-size="16" font-weight="bold" fill="#3f6ff0" text-anchor="middle" font-family="Liberation Sans,sans-serif">Ω</text></svg></div>
<div class="ic" style="left:97.71px;top:171.50px"><svg viewBox="0 0 20 20"><rect x="3" y="2.700" width="13.600" height="12" rx="1" fill="#dbe7f7" stroke="#a9c0e2" stroke-width=".7"/><rect x="4.600" y="4.200" width="10.400" height="8.800" fill="#3f9bd2"/><rect x="4.600" y="4.200" width="10.400" height="3" fill="#5fb0de"/><path d="M11.800 5.400V11.200H6.800" fill="none" stroke="#eaf4fc" stroke-width="1"/><circle cx="16.600" cy="11.800" r="1.700" fill="#fbe9a0" stroke="#d8a830" stroke-width="1"/><circle cx="12.200" cy="15.800" r="1.700" fill="#fbe9a0" stroke="#d8a830" stroke-width="1"/><path d="M15.400 12.800L12 13.400M13.200 14.600L13.600 11.600" stroke="#c9a040" stroke-width=".9"/></svg></div>
<div class="ic" style="left:127.78px;top:171.50px"><svg viewBox="0 0 20 20"><rect x="2.800" y="2.400" width="11.600" height="11.600" fill="#fff" stroke="#2f6fd0" stroke-width=".9"/><rect x="2.800" y="2.400" width="11.600" height="1.800" fill="#2f6fd0"/><rect x="2.800" y="12.400" width="11.600" height="1.600" fill="#2458b0"/><text x="8.600" y="11.200" font-size="8.500" font-weight="bold" fill="#2f6fd0" text-anchor="middle" font-family="Liberation Sans,sans-serif">W</text><rect x="7.900" y="10.400" width="10.300" height="7.500" fill="#f1f1f1" stroke="#a5a5a5" stroke-width=".6"/><rect x="9.2" y="11.7" width="7.7" height="4.9" fill="#e2741c"/><rect x="9.2" y="11.7" width="7.7" height="1.078" fill="#c85a14"/><circle cx="14.59" cy="14.395" r="0.9800000000000001" fill="#f7c44a" opacity=".9"/><path d="M9.2 13.905L11.51 14.395L14.975 15.62V16.6H9.2z" fill="#4a2410" opacity=".85"/><rect x="9.2" y="15.718" width="7.7" height="0.882" fill="#8a3c12" opacity=".6"/></svg></div>
<div class="sep" style="left:159px;top:173px"></div>
<div class="ic" style="left:169.10px;top:171.50px"><svg viewBox="0 0 20 20"><g opacity="1"><rect x="4.4" y="4.4" width="13.1" height="12.1" fill="#a9b5d2"/><rect x="4.4" y="4.4" width="13.1" height="2.800" fill="url(#gTbl)"/><rect x="5.60" y="7.80" width="2.77" height="2.03" fill="#fff"/><rect x="5.60" y="10.83" width="2.77" height="2.03" fill="#fff"/><rect x="5.60" y="13.87" width="2.77" height="2.03" fill="#fff"/><rect x="9.57" y="7.80" width="2.77" height="2.03" fill="#fff"/><rect x="9.57" y="10.83" width="2.77" height="2.03" fill="#fff"/><rect x="9.57" y="13.87" width="2.77" height="2.03" fill="#fff"/><rect x="13.53" y="7.80" width="2.77" height="2.03" fill="#fff"/><rect x="13.53" y="10.83" width="2.77" height="2.03" fill="#fff"/><rect x="13.53" y="13.87" width="2.77" height="2.03" fill="#fff"/></g></svg></div>
<div class="ic" style="left:199.17px;top:171.50px"><svg viewBox="0 0 20 20"><g opacity="1"><rect x="5.1" y="4.4" width="13" height="12.1" fill="#a9b5d2"/><rect x="5.1" y="4.4" width="13" height="2.800" fill="url(#gTbl)"/><rect x="6.30" y="7.80" width="2.73" height="2.03" fill="#fff"/><rect x="6.30" y="10.83" width="2.73" height="2.03" fill="#fff"/><rect x="6.30" y="13.87" width="2.73" height="2.03" fill="#fff"/><rect x="10.23" y="7.80" width="2.73" height="2.03" fill="#fff"/><rect x="10.23" y="10.83" width="2.73" height="2.03" fill="#fff"/><rect x="10.23" y="13.87" width="2.73" height="2.03" fill="#fff"/><rect x="14.17" y="7.80" width="2.73" height="2.03" fill="#fff"/><rect x="14.17" y="10.83" width="2.73" height="2.03" fill="#fff"/><rect x="14.17" y="13.87" width="2.73" height="2.03" fill="#fff"/></g><rect x="12.300" y="4.400" width="7.100" height="7" rx=".6" fill="#ea2f3a"/><path d="M14.100 6.100L17.700 9.700M17.700 6.100L14.100 9.700" stroke="#fff" stroke-width="1.500"/></svg></div>
<div class="ic" style="left:229.24px;top:171.50px"><svg viewBox="0 0 20 20"><text x="5.800" y="9.500" font-size="8.600" font-weight="bold" fill="#111" text-anchor="middle" font-family="Liberation Sans,sans-serif">T</text><g opacity=".75"><rect x="7" y="6.400" width="11.300" height="10.100" fill="#c5cee6"/><rect x="7" y="6.400" width="11.300" height="1" fill="#7f92cc"/><rect x="7" y="6.400" width="1.200" height="10.100" fill="#7f92cc"/><rect x="8.8" y="8.2" width="1.6" height="2" fill="#fff"/><rect x="11.2" y="8.2" width="3" height="2" fill="#fff"/><rect x="15" y="8.2" width="3.3" height="2" fill="#fff"/><rect x="8.8" y="11" width="1.6" height="2" fill="#fff"/><rect x="11.2" y="11" width="3" height="2" fill="#fff"/><rect x="15" y="11" width="3.3" height="2" fill="#fff"/><rect x="8.8" y="13.8" width="1.6" height="2" fill="#fff"/><rect x="11.2" y="13.8" width="3" height="2" fill="#fff"/><rect x="15" y="13.8" width="3.3" height="2" fill="#fff"/></g></svg></div>
<div class="ic" style="left:258.71px;top:171.50px"><svg viewBox="0 0 20 20"><rect x="5" y="4.4" width="13.5" height="13" fill="#a4b8ea"/><rect x="5.90" y="5.30" width="2.25" height="2.12" fill="#fff"/><rect x="5.90" y="8.33" width="2.25" height="2.12" fill="#fff"/><rect x="5.90" y="11.35" width="2.25" height="2.12" fill="#fff"/><rect x="5.90" y="14.38" width="2.25" height="2.12" fill="#fff"/><rect x="9.05" y="5.30" width="2.25" height="2.12" fill="#fff"/><rect x="9.05" y="8.33" width="2.25" height="2.12" fill="#fff"/><rect x="9.05" y="11.35" width="2.25" height="2.12" fill="#fff"/><rect x="9.05" y="14.38" width="2.25" height="2.12" fill="#fff"/><rect x="12.20" y="5.30" width="2.25" height="2.12" fill="#fff"/><rect x="12.20" y="8.33" width="2.25" height="2.12" fill="#fff"/><rect x="12.20" y="11.35" width="2.25" height="2.12" fill="#fff"/><rect x="12.20" y="14.38" width="2.25" height="2.12" fill="#fff"/><rect x="15.35" y="5.30" width="2.25" height="2.12" fill="#fff"/><rect x="15.35" y="8.33" width="2.25" height="2.12" fill="#fff"/><rect x="15.35" y="11.35" width="2.25" height="2.12" fill="#fff"/><rect x="15.35" y="14.38" width="2.25" height="2.12" fill="#fff"/><rect x="5" y="10.700" width="13.500" height="3.300" fill="#2f7fe8"/><rect x="6" y="11.800" width="11.500" height="1" fill="#5f9ff0"/><path d="M11.800 1.400L13.600 3.600H12.300V6.600H11.300V3.600H10z" fill="#111"/></svg></div>
<div class="ic" style="left:288.78px;top:171.50px"><svg viewBox="0 0 20 20"><path d="M5.100 4.900H9.600V16.900H5.100" fill="none" stroke="#333" stroke-width="1"/><rect x="5.100" y="8.600" width="10.900" height="4.300" fill="#f07070" stroke="#d84a4a" stroke-width=".5"/><rect x="5.500" y="9" width="10" height="1.400" fill="#f79a9a"/><path d="M16 10.800H18.200M17.600 9.200L19.800 10.800L17.600 12.400z" stroke="#222" stroke-width=".9" fill="#222"/></svg></div>
<div class="ic" style="left:318.75px;top:171.50px"><svg viewBox="0 0 20 20"><rect x="6.4" y="4.4" width="12.8" height="13" fill="#a4b8ea"/><rect x="7.30" y="5.30" width="2.08" height="2.12" fill="#fff"/><rect x="7.30" y="8.33" width="2.08" height="2.12" fill="#fff"/><rect x="7.30" y="11.35" width="2.08" height="2.12" fill="#fff"/><rect x="7.30" y="14.38" width="2.08" height="2.12" fill="#fff"/><rect x="10.28" y="5.30" width="2.08" height="2.12" fill="#fff"/><rect x="10.28" y="8.33" width="2.08" height="2.12" fill="#fff"/><rect x="10.28" y="11.35" width="2.08" height="2.12" fill="#fff"/><rect x="10.28" y="14.38" width="2.08" height="2.12" fill="#fff"/><rect x="13.25" y="5.30" width="2.08" height="2.12" fill="#fff"/><rect x="13.25" y="8.33" width="2.08" height="2.12" fill="#fff"/><rect x="13.25" y="11.35" width="2.08" height="2.12" fill="#fff"/><rect x="13.25" y="14.38" width="2.08" height="2.12" fill="#fff"/><rect x="16.23" y="5.30" width="2.08" height="2.12" fill="#fff"/><rect x="16.23" y="8.33" width="2.08" height="2.12" fill="#fff"/><rect x="16.23" y="11.35" width="2.08" height="2.12" fill="#fff"/><rect x="16.23" y="14.38" width="2.08" height="2.12" fill="#fff"/><rect x="9.300" y="4.400" width="3.600" height="13" fill="#2f7fe8"/><rect x="10.500" y="5.200" width="1" height="11.400" fill="#6fa8f4"/><path d="M2.700 10.800L4.900 9.100V10.300H8.200V11.300H4.900V12.500z" fill="#111"/></svg></div>
<div class="ic" style="left:348.72px;top:171.50px"><svg viewBox="0 0 20 20"><path d="M5.600 4.400V8H18.100V4.400" fill="none" stroke="#333" stroke-width="1"/><rect x="9.400" y="4.400" width="4.900" height="8.500" fill="#f07070" stroke="#d84a4a" stroke-width=".5"/><rect x="9.900" y="4.800" width="1.500" height="7.700" fill="#f79a9a"/><path d="M11.800 12.900V15.600M10.200 15.200L11.800 17.600L13.400 15.200z" stroke="#222" stroke-width=".9" fill="#222"/></svg></div>
<div class="ic" style="left:378.09px;top:171.50px"><svg viewBox="0 0 20 20"><rect x="3.2" y="3.6" width="16.1" height="12.9" fill="#4557b0"/><rect x="4.200" y="4.500" width="1.700" height="1.700" fill="#fff"/><rect x="7" y="4.500" width="5" height="1.700" fill="#fff"/><rect x="13.200" y="4.500" width="5" height="1.700" fill="#fff"/><rect x="4.200" y="7.400" width="1.700" height="2.600" fill="#fff"/><rect x="4.200" y="11.400" width="1.700" height="4" fill="#fff"/><rect x="7" y="7.300" width="11.300" height="8.300" fill="url(#gLav)"/></svg></div>
<div class="ic" style="left:407.96px;top:171.50px"><svg viewBox="0 0 20 20"><rect x="3.2" y="3.6" width="16.1" height="12.9" fill="url(#gTb2)"/><rect x="4.200" y="4.5" width="1.900" height="1.900" fill="#fff"/><rect x="16.400" y="4.5" width="1.900" height="1.900" fill="#fff"/><rect x="4.200" y="7.5" width="1.900" height="1.900" fill="#fff"/><rect x="16.400" y="7.5" width="1.900" height="1.900" fill="#fff"/><rect x="4.200" y="10.5" width="1.900" height="1.900" fill="#fff"/><rect x="16.400" y="10.5" width="1.900" height="1.900" fill="#fff"/><rect x="4.200" y="13.5" width="1.900" height="1.900" fill="#fff"/><rect x="16.400" y="13.5" width="1.900" height="1.900" fill="#fff"/><rect x="7.200" y="4.500" width="8.100" height="1.700" fill="#eaf2fc"/><rect x="7.200" y="13.700" width="8.100" height="1.700" fill="#eaf2fc"/><rect x="7" y="7.300" width="8.600" height="5.400" fill="#8dbcf0"/><path d="M10.600 9.500H13V8L15.400 10L13 12V10.500H10.600z" fill="#fff"/></svg></div>
<div class="ic" style="left:438.03px;top:171.50px"><svg viewBox="0 0 20 20"><rect x="3.2" y="3.6" width="16.1" height="12.9" fill="url(#gTb2)"/><rect x="4.200" y="4.5" width="1.900" height="1.900" fill="#fff"/><rect x="16.400" y="4.5" width="1.900" height="1.900" fill="#fff"/><rect x="4.200" y="7.5" width="1.900" height="1.900" fill="#fff"/><rect x="16.400" y="7.5" width="1.900" height="1.900" fill="#fff"/><rect x="4.200" y="10.5" width="1.900" height="1.900" fill="#fff"/><rect x="16.400" y="10.5" width="1.900" height="1.900" fill="#fff"/><rect x="4.200" y="13.5" width="1.900" height="1.900" fill="#fff"/><rect x="16.400" y="13.5" width="1.900" height="1.900" fill="#fff"/><rect x="7.200" y="4.500" width="8.100" height="1.700" fill="#eaf2fc"/><rect x="7" y="7.300" width="8.600" height="8.200" fill="#8dbcf0"/><path d="M10.800 8.400H11.800V12H13.400L11.300 14.600L9.200 12H10.800z" fill="#fff"/></svg></div>
<div class="ic" style="left:467.90px;top:171.50px"><svg viewBox="0 0 20 20"><rect x="3.2" y="3.6" width="16.1" height="12.9" fill="#4557b0"/><rect x="4.200" y="4.500" width="1.700" height="1.700" fill="#fff"/><rect x="7" y="4.500" width="5" height="1.700" fill="#fff"/><rect x="13.200" y="4.500" width="5" height="1.700" fill="#fff"/><rect x="4.200" y="7.400" width="1.700" height="2.600" fill="#fff"/><rect x="4.200" y="11.400" width="1.700" height="4" fill="#fff"/><rect x="7.00" y="7.40" width="3" height="2" fill="#8a92e2"/><rect x="7.00" y="10.30" width="3" height="2" fill="#8a92e2"/><rect x="7.00" y="13.20" width="3" height="2" fill="#8a92e2"/><rect x="11.10" y="7.40" width="3" height="2" fill="#8a92e2"/><rect x="11.10" y="10.30" width="3" height="2" fill="#8a92e2"/><rect x="11.10" y="13.20" width="3" height="2" fill="#8a92e2"/><rect x="15.20" y="7.40" width="3" height="2" fill="#8a92e2"/><rect x="15.20" y="10.30" width="3" height="2" fill="#8a92e2"/><rect x="15.20" y="13.20" width="3" height="2" fill="#8a92e2"/></svg></div>
<div class="ic" style="left:498.07px;top:171.50px"><svg viewBox="0 0 20 20"><rect x="3.2" y="3.6" width="16.1" height="12.9" fill="url(#gTb2)"/><rect x="4.200" y="4.5" width="1.900" height="1.900" fill="#fff"/><rect x="16.400" y="4.5" width="1.900" height="1.900" fill="#fff"/><rect x="4.200" y="7.5" width="1.900" height="1.900" fill="#fff"/><rect x="16.400" y="7.5" width="1.900" height="1.900" fill="#fff"/><rect x="4.200" y="10.5" width="1.900" height="1.900" fill="#fff"/><rect x="16.400" y="10.5" width="1.900" height="1.900" fill="#fff"/><rect x="4.200" y="13.5" width="1.900" height="1.900" fill="#fff"/><rect x="16.400" y="13.5" width="1.900" height="1.900" fill="#fff"/><rect x="7.200" y="4.5" width="8.100" height="1.900" fill="#86bbf4"/><rect x="7.200" y="7.5" width="8.100" height="1.900" fill="#86bbf4"/><rect x="7.200" y="10.5" width="8.100" height="1.900" fill="#86bbf4"/><rect x="7.200" y="13.5" width="8.100" height="1.900" fill="#86bbf4"/></svg></div>
<div class="ic" style="left:528.04px;top:171.50px"><svg viewBox="0 0 20 20"><rect x="3.2" y="3.6" width="16.1" height="12.9" fill="url(#gTb2)"/><rect x="4.200" y="4.5" width="1.900" height="1.900" fill="#fff"/><rect x="16.400" y="4.5" width="1.900" height="1.900" fill="#fff"/><rect x="4.200" y="7.5" width="1.900" height="1.900" fill="#fff"/><rect x="16.400" y="7.5" width="1.900" height="1.900" fill="#fff"/><rect x="4.200" y="10.5" width="1.900" height="1.900" fill="#fff"/><rect x="16.400" y="10.5" width="1.900" height="1.900" fill="#fff"/><rect x="4.200" y="13.5" width="1.900" height="1.900" fill="#fff"/><rect x="16.400" y="13.5" width="1.900" height="1.900" fill="#fff"/><rect x="7.1" y="4.300" width="1.500" height="11.500" fill="#86bbf4"/><rect x="9.4" y="4.300" width="1.500" height="11.500" fill="#86bbf4"/><rect x="11.7" y="4.300" width="1.500" height="11.500" fill="#86bbf4"/><rect x="14" y="4.300" width="1.500" height="11.500" fill="#86bbf4"/></svg></div>
<div class="ic" style="left:558.71px;top:171.50px"><svg viewBox="0 0 20 20"><g opacity=".3"><path d="M5.200 3.800H13L16.300 7.100V18.200H5.200z" fill="#fff" stroke="#aaa" stroke-width=".7"/><rect x="10.800" y="11.200" width="2.400" height="6.600" fill="#7fc840"/><rect x="13.400" y="12.600" width="2.400" height="5.200" fill="#f09030"/><rect x="16" y="14.200" width="2.200" height="3.600" fill="#50b0e8"/></g></svg></div>
<div class="sep" style="left:592px;top:173px"></div>
<div class="ic" style="left:601.33px;top:171.50px"><svg viewBox="0 0 20 20"><rect x="5.200" y="3.600" width="9.600" height="6" fill="#f4f5f8" stroke="#a8a8a8" stroke-width=".7"/><rect x="2.800" y="8.900" width="14.400" height="7.300" rx="1" fill="#d2d2d2" stroke="#9a9a9a" stroke-width=".5"/><rect x="4.600" y="8.900" width="10.800" height="4.600" fill="#2b2b2b"/><rect x="4.600" y="10.600" width="10.800" height=".8" fill="#666"/><rect x="5.200" y="14" width="9.600" height="4.200" fill="#f8f8f8" stroke="#a8a8a8" stroke-width=".6"/><rect x="6.800" y="15.700" width="6.400" height="1.100" fill="#3f7fe8"/></svg></div>
<div class="ic" style="left:631.40px;top:171.50px"><svg viewBox="0 0 20 20"><rect x="2.300" y="2.600" width="10.200" height="12" fill="#eef1f6" stroke="#a9a9a9" stroke-width=".8"/><circle cx="9.600" cy="9.100" r="4.300" fill="#e4f1fb" stroke="#8a8a8a" stroke-width="1.300"/><circle cx="9.400" cy="9" r="2.800" fill="#2f7fe0"/><path d="M8.200 8C9.200 7.200 10.400 7.600 10.200 8.800C10 10 9.200 10.800 8.400 10.400C7.600 10 7.600 8.600 8.200 8z" fill="#6fd040"/><path d="M12.800 12.600L17.400 17.200" stroke="#555" stroke-width="2.200" stroke-linecap="round"/></svg></div>
<div class="ic" style="left:661.47px;top:171.50px"><svg viewBox="0 0 20 20"><g fill="#333"><rect x="3.900" y="3.600" width="4.200" height="2" rx=".5"/><rect x="11.700" y="3.600" width="4.200" height="2" rx=".5"/><path d="M4.300 5.600H7.700L8.700 9.400V15H3.300V9.400z"/><path d="M12.100 5.600H15.500L16.500 9.400V15H11.100V9.400z"/><rect x="8.500" y="7.800" width="2.800" height="4.400"/><rect x="2.800" y="15" width="6.400" height="2.100" rx=".6"/><rect x="10.600" y="15" width="6.400" height="2.100" rx=".6"/></g><rect x="4.600" y="9.600" width="1.200" height="5" fill="#666"/><rect x="12.400" y="9.600" width="1.200" height="5" fill="#666"/></svg></div>
<div class="ic" style="left:690.74px;top:171.50px"><svg viewBox="0 0 20 20"><rect x="2.700" y="3.700" width="12" height="12.500" rx="1" fill="url(#gClip)"/><path d="M6 4.200V3.200h1.600a1.100 1.100 0 0 1 2.200 0h1.600v1.700h-5.400z" fill="#d4d4d4" stroke="#999" stroke-width=".3"/><path d="M6.700 8.600H13.800L16.600 11.400V16.600H6.700z" fill="url(#gPage)" stroke="#aaa" stroke-width=".6"/><path d="M13.800 8.600V11.400H16.600" fill="#e8e8e8" stroke="#aaa" stroke-width=".5"/></svg></div>
<div class="ic" style="left:721.61px;top:171.50px"><svg viewBox="0 0 20 20"><circle cx="9.800" cy="10.400" r="7" fill="url(#gHelp)"/><text x="9.800" y="14.600" font-size="11.500" font-weight="bold" fill="#fff" text-anchor="middle" font-family="Liberation Sans,sans-serif">?</text></svg></div>
<div class="ic" style="left:804.50px;top:6.50px"><svg viewBox="0 0 20 20"><rect x="3.2" y="3.6" width="13.6" height="10.4" rx=".8" fill="#dfe8f7" stroke="#9db4de" stroke-width=".6"/><rect x="4.7" y="5" width="10.6" height="7.4" fill="#4568cf"/><rect x="4.7" y="5" width="10.6" height="2" fill="#5f82e0"/><rect x="8.2" y="14" width="3.6" height="1.4" fill="#7d97d6"/><rect x="4.4" y="15.4" width="11.2" height="1" fill="#3f62c4"/></svg></div>
</div>
<div id="body" class="abs">顶顶顶顶顶</div>
<div id="bot" class="abs">元素路径:<span>字数统计</span></div>
</div>
<div id="hr" class="abs"></div>
<div id="btn" class="abs">立即提交</div>
</div></div>
</body></html>
